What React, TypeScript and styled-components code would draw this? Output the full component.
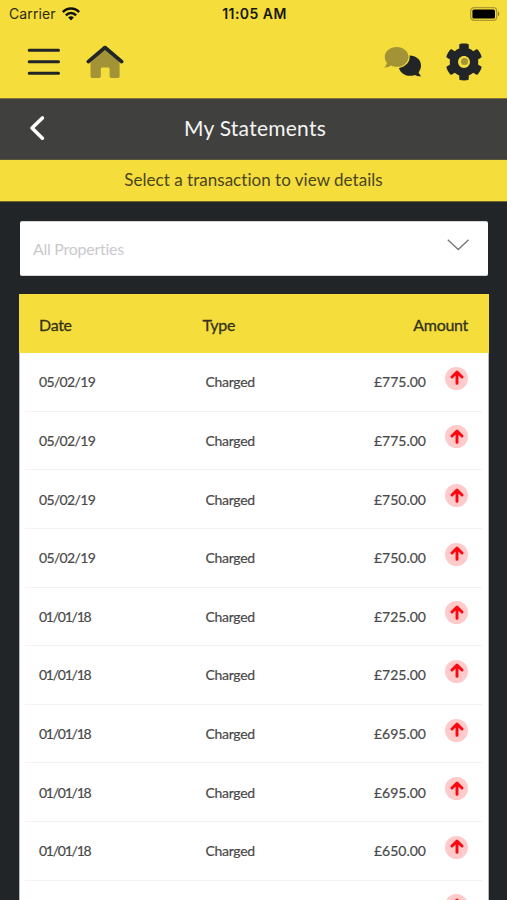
import React from "react";
import styled, { createGlobalStyle } from "styled-components";
import { FaCog } from "react-icons/fa";

const yellow = "#f5dd3b";
const ink = "#212528";
const olive = "#a19336";

const GlobalStyle = createGlobalStyle`
  html, body { margin: 0; padding: 0; background: ${ink}; }
  *, *::before, *::after { box-sizing: border-box; }
`;

const Screen = styled.div`
  width: 507px;
  height: 900px;
  overflow: hidden;
  display: flex;
  flex-direction: column;
  background: ${ink};
  font-family: Lato, "Liberation Sans", sans-serif;
`;

const TopArea = styled.header`
  height: 99px;
  flex: none;
  background: ${yellow};
  border-bottom: 1px solid #7d7338;
`;

const StatusBar = styled.div`
  height: 27px;
  padding: 0 7px 0 9px;
  display: grid;
  grid-template-columns: 1fr auto 1fr;
  align-items: center;
  font-family: Inter, "Liberation Sans", sans-serif;
  font-size: 14px;
  color: #17170f;
`;

const Carrier = styled.div`
  display: flex;
  align-items: center;
  gap: 6px;
  letter-spacing: 0.1px;
  color: #2c2a16;
`;

const Clock = styled.div`
  font-weight: 600;
  letter-spacing: 0.45px;
`;

const Battery = styled.div`
  display: flex;
  justify-content: flex-end;
`;

const NavBar = styled.nav`
  height: 69px;
  padding: 0 24px 0 27px;
  display: flex;
  align-items: center;
  justify-content: space-between;
`;

const NavGroup = styled.div<{ $gap: number }>`
  display: flex;
  align-items: center;
  gap: ${(p) => p.$gap}px;
  svg { display: block; }
`;

const IconButton = styled.button`
  padding: 0;
  border: 0;
  background: none;
  color: ${ink};
`;

const CogButton = styled(IconButton)`
  display: grid;
  place-items: center;
  > * { grid-area: 1 / 1; }
`;

const CogDot = styled.span`
  width: 7px;
  height: 7px;
  border-radius: 50%;
  background: ${olive};
`;

const TitleBar = styled.div`
  height: 61px;
  flex: none;
  padding: 0 28px 2px;
  display: grid;
  grid-template-columns: 20px 1fr 20px;
  align-items: center;
  background: #40403e;
  border-bottom: 1px solid #59553a;
  svg { display: block; }
`;

const Title = styled.h1`
  margin: 0;
  padding-left: 3px;
  text-align: center;
  font-size: 21px;
  line-height: 28px;
  font-weight: 400;
  letter-spacing: 0.25px;
  color: #f5f5f5;
`;

const Hint = styled.p`
  margin: 0;
  height: 42px;
  flex: none;
  text-align: center;
  line-height: 40px;
  font-size: 17px;
  letter-spacing: 0.03px;
  color: #4b4520;
  background: ${yellow};
  border-bottom: 1px solid #6c662f;
`;

const Content = styled.main`
  padding: 18.5px 18px 0 19px;
`;

const Select = styled.div`
  height: 55px;
  margin: 0 1px 18.5px;
  padding: 0 18px 0 13px;
  display: flex;
  align-items: center;
  justify-content: space-between;
  border-radius: 2px;
  background: #fff;
  border: 1px solid #d5d6d7;
  border-width: 1px 0;
  font-size: 16px;
  letter-spacing: -0.27px;
  color: #cacace;
`;

const Chevron = styled.svg`
  display: block;
  margin-top: -6px;
`;

const Table = styled.section`
  background: #fff;
  border-left: 1px solid #b8b9ba;
  border-right: 1px solid #b8b9ba;
`;

const TableHead = styled.div`
  height: 59px;
  margin: 0 -1px;
  padding: 1px 21px 0 20px;
  display: grid;
  grid-template-columns: 163.5px 1fr auto;
  align-items: center;
  background: ${yellow};
  font-size: 16px;
  letter-spacing: -0.3px;
  color: #34321b;
  -webkit-text-stroke: 0.3px #34321b;
`;

const Row = styled.div`
  height: 58.63px;
  margin: 0 6px 0 5px;
  padding: 0 14px;
  display: grid;
  grid-template-columns: 166.5px 1fr auto 42px;
  align-items: center;
  border-bottom: 1px solid #f3f3f3;
  font-size: 14px;
  color: #4a4a4a;
  -webkit-text-stroke: 0.2px #4a4a4a;
`;

const DateText = styled.span<{ $narrow: boolean }>`
  letter-spacing: ${(p) => (p.$narrow ? -1.25 : -0.65)}px;
`;

const TypeText = styled.span`
  letter-spacing: -0.3px;
`;

const Amount = styled.span`
  text-align: right;
  letter-spacing: 0;
`;

const Direction = styled.span`
  width: 23px;
  height: 23px;
  margin-bottom: 7px;
  justify-self: end;
  display: grid;
  place-items: center;
  border-radius: 50%;
  background: #ffcaca;
`;

const transactions = [
  { date: "05/02/19", type: "Charged", amount: "£775.00" },
  { date: "05/02/19", type: "Charged", amount: "£775.00" },
  { date: "05/02/19", type: "Charged", amount: "£750.00" },
  { date: "05/02/19", type: "Charged", amount: "£750.00" },
  { date: "01/01/18", type: "Charged", amount: "£725.00" },
  { date: "01/01/18", type: "Charged", amount: "£725.00" },
  { date: "01/01/18", type: "Charged", amount: "£695.00" },
  { date: "01/01/18", type: "Charged", amount: "£695.00" },
  { date: "01/01/18", type: "Charged", amount: "£650.00" },
  { date: "", type: "", amount: "" },
];

const WifiIcon = () => (
  <svg width="18" height="14" viewBox="0 0 18 14" fill="none" stroke="#111" strokeWidth="2.5">
    <path d="M0.9 5.2C5.3 0.4 12.7 0.4 17.1 5.2" />
    <path d="M3.9 8.3C6.7 5.3 11.3 5.3 14.1 8.3" />
    <path d="M6.2 10.5C7.8 8.8 10.2 8.8 11.8 10.5L9 13.4Z" fill="#111" stroke="none" />
  </svg>
);

const BatteryIcon = () => (
  <svg width="30" height="14" viewBox="0 0 30 14">
    <rect x="0.7" y="0.7" width="26" height="12.6" rx="3.4" fill="none" stroke="#ab9b31" strokeWidth="1.3" />
    <rect x="2.4" y="2.4" width="22.6" height="9.2" rx="1.6" fill="#000" />
    <path d="M28 4.6C29.8 5.4 29.8 8.6 28 9.4Z" fill="#8c7f2c" />
  </svg>
);

const MenuIcon = () => (
  <svg width="34" height="30" viewBox="0 0 34 30" stroke={ink} strokeWidth="3" strokeLinecap="round">
    <path d="M2.2 3.2H31.5M2.2 14.7H31.5M2.2 26.2H31.5" />
  </svg>
);

const HomeIcon = () => (
  <svg width="38" height="34" viewBox="0 0 38 34" fill="none">
    <path d="M4.5 15L19 3L33.6 15V31.3Q33.6 33 31.9 33H25.3Q23.6 33 23.6 31.3V24Q23.6 22.6 22.2 22.6H16.2Q14.8 22.6 14.8 24V31.3Q14.8 33 13.1 33H6.2Q4.5 33 4.5 31.3Z" fill={olive} />
    <path d="M2.3 16.6L19 2.5L35.7 16.6" stroke={ink} strokeWidth="3.6" strokeLinecap="round" strokeLinejoin="round" />
  </svg>
);

const ChatIcon = () => (
  <svg width="38" height="32" viewBox="0 0 38 32">
    <path d="M25 9.5C32 9.3 37 13.7 37 19.6C37 22.4 36 24.6 34.6 26.2C35.1 27.8 35.9 28.9 37.2 30.2C34.8 30.5 32.7 29.8 30.9 28.9C24.5 31.4 17.8 29 15 22.5Z" fill={ink} />
    <path d="M12.7 1C6 1 0.8 5.4 0.8 10.9C0.8 13.2 1.6 15.2 3 16.8C2.5 18.6 1.6 20.1 0.1 21.5C2.9 21.7 5.2 20.7 7 19.5C8.7 20.3 10.6 20.8 12.7 20.8C19.3 20.8 24.5 16.4 24.5 10.9C24.5 5.4 19.3 1 12.7 1Z" fill={olive} stroke={yellow} strokeWidth="2.4" paintOrder="stroke" />
  </svg>
);

const ArrowUpIcon = () => (
  <svg width="14" height="16" viewBox="0 0 14 16" fill="none" stroke="#fb0712" strokeWidth="2.9" strokeLinecap="round" strokeLinejoin="round">
    <path d="M7 13.4V2.5M2 7L7 2.1L12 7" />
  </svg>
);

export default function App() {
  return (
    <>
      <GlobalStyle />
      <Screen>
        <TopArea>
          <StatusBar>
            <Carrier>Carrier<WifiIcon /></Carrier>
            <Clock>11:05 AM</Clock>
            <Battery><BatteryIcon /></Battery>
          </StatusBar>
          <NavBar>
            <NavGroup $gap={25}>
              <IconButton aria-label="Menu"><MenuIcon /></IconButton>
              <IconButton aria-label="Home"><HomeIcon /></IconButton>
            </NavGroup>
            <NavGroup $gap={23}>
              <IconButton aria-label="Messages"><ChatIcon /></IconButton>
              <CogButton aria-label="Settings"><FaCog size={38} /><CogDot /></CogButton>
            </NavGroup>
          </NavBar>
        </TopArea>
        <TitleBar>
          <svg width="18" height="26" viewBox="0 0 18 26" fill="none" stroke="#fff" strokeWidth="3.6" strokeLinecap="round" strokeLinejoin="round">
            <path d="M14.4 3L4 13L14.4 23.2" />
          </svg>
          <Title>My Statements</Title>
        </TitleBar>
        <Hint>Select a transaction to view details</Hint>
        <Content>
          <Select>
            All Properties
            <Chevron width="24" height="14" viewBox="0 0 24 14" fill="none" stroke="#77797b" strokeWidth="1.4">
              <path d="M1.8 1.8L12.2 11.5L22.6 1.8" />
            </Chevron>
          </Select>
          <Table>
            <TableHead><span>Date</span><span>Type</span><span>Amount</span></TableHead>
            {transactions.map(({ date, type, amount }, i) => (
              <Row key={i}>
                <DateText $narrow={date.startsWith("01")}>{date}</DateText>
                <TypeText>{type}</TypeText>
                <Amount>{amount}</Amount>
                <Direction><ArrowUpIcon /></Direction>
              </Row>
            ))}
          </Table>
        </Content>
      </Screen>
    </>
  );
}
